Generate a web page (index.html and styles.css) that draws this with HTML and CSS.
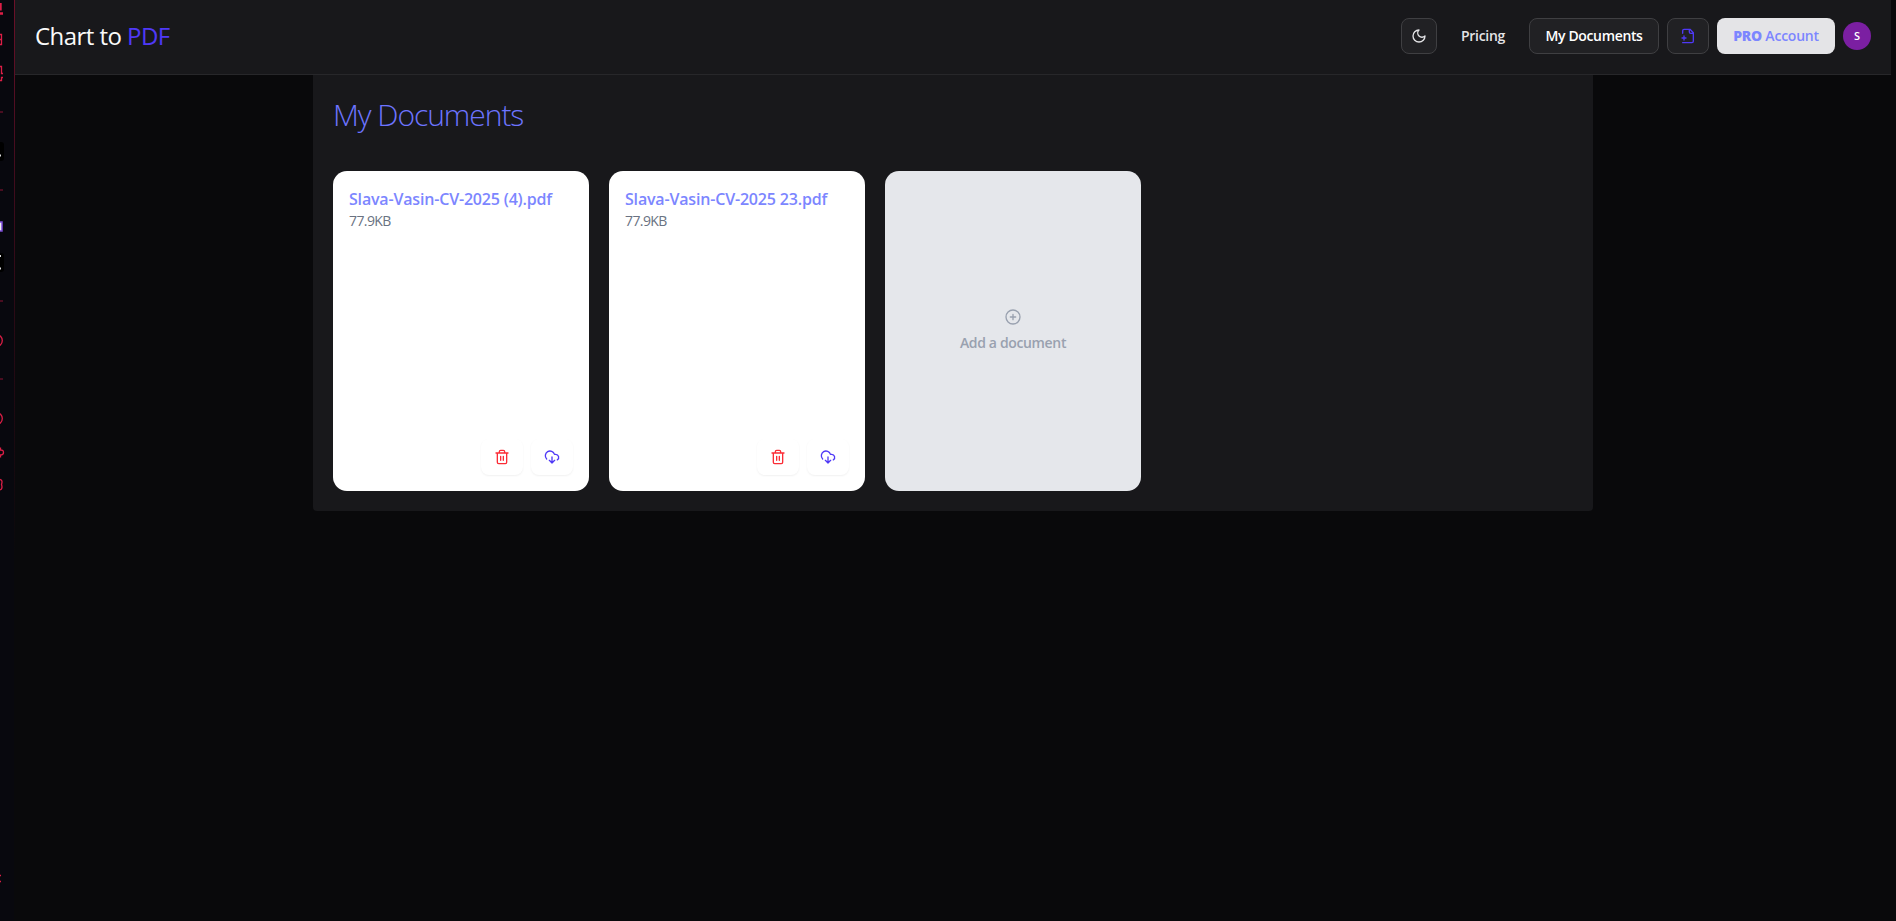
FILE: index.html
```html
<!DOCTYPE html>
<html lang="en">
<head>
<meta charset="utf-8">
<title>Chart to PDF</title>
<link rel="stylesheet" href="styles.css">
</head>
<body>
<svg class="defs" width="0" height="0" aria-hidden="true">
  <symbol id="trash" viewBox="0 0 24 24"><path d="M3 6h18M19 6v14a2 2 0 0 1-2 2H7a2 2 0 0 1-2-2V6M8 6V4a2 2 0 0 1 2-2h4a2 2 0 0 1 2 2v2M10 11v6M14 11v6"/></symbol>
  <symbol id="download" viewBox="0 0 24 24"><path d="M4 14.899A7 7 0 1 1 15.71 8h1.79a4.5 4.5 0 0 1 2.5 8.242M12 12v9M8 17l4 4 4-4"/></symbol>
</svg>
<aside class="rail">
  <svg class="rail-icons" viewBox="0 0 15 921" width="15" height="921">
    <g class="rail-red">
      <path class="rail-bold" d="M0.500 3V10.500M0 13.500H3"/>
      <path d="M0 34.500H1.500V44.500H0M0 39.500H2"/>
      <path d="M0 66.500H1.500V73.500H3M0 80.500H1.500V77.500H3"/>
      <circle cx="-3.700" cy="340.500" r="6"/>
      <circle cx="-3.700" cy="418.500" r="6"/>
      <path d="M0.500 447.500V450Q3.500 450 3.500 452.500T0.500 455V457.500"/>
      <path d="M0 479.500Q3 480 1.500 484.500Q3 489 0 490"/>
      <path d="M0 875.500H1M0 881.500H1"/>
    </g>
    <g class="rail-lines"><path d="M0 112H3M0 190H3M0 301H3M0 379H3"/></g>
    <rect x="-8" y="142" width="12" height="19" rx="3"/>
    <rect x="-8" y="253" width="12" height="19" rx="3"/>
    <path class="rail-white" d="M0 155.500H1M0 256H1M0 268.500H1"/>
    <rect class="rail-purple" x="-6" y="222" width="8" height="9"/>
  </svg>
</aside>
<div class="page">
  <header class="topbar">
    <a class="brand">Chart to <span>PDF</span></a>
    <nav class="nav">
      <button class="btn outline square"><svg class="icon" viewBox="0 0 24 24"><path d="M12 3a6 6 0 0 0 9 9 9 9 0 1 1-9-9Z"/></svg></button>
      <a class="btn pricing">Pricing</a>
      <a class="btn outline docs">My Documents</a>
      <button class="btn outline new"><svg class="icon" viewBox="0 0 24 24"><path d="M4 22h14a2 2 0 0 0 2-2V7l-5-5H6a2 2 0 0 0-2 2v4M14 2v4a2 2 0 0 0 2 2h4M3 15h6M6 12v6"/></svg></button>
      <a class="btn pro"><span><b>PRO</b> Account</span></a>
      <span class="avatar">S</span>
    </nav>
  </header>
  <main class="panel">
    <h1>My Documents</h1>
    <div class="cards">
      <article class="card">
        <h2>Slava-Vasin-CV-2025 (4).pdf</h2>
        <p>77.9KB</p>
        <div class="actions">
          <button class="action remove"><svg class="icon"><use href="#trash"/></svg></button>
          <button class="action save"><svg class="icon"><use href="#download"/></svg></button>
        </div>
      </article>
      <article class="card">
        <h2>Slava-Vasin-CV-2025 23.pdf</h2>
        <p>77.9KB</p>
        <div class="actions">
          <button class="action remove"><svg class="icon"><use href="#trash"/></svg></button>
          <button class="action save"><svg class="icon"><use href="#download"/></svg></button>
        </div>
      </article>
      <a class="card add">
        <svg class="icon" viewBox="0 0 24 24"><circle cx="12" cy="12" r="10.500"/><path d="M8 12h8M12 8v8"/></svg>
        <span>Add a document</span>
      </a>
    </div>
  </main>
</div>
</body>
</html>
```
FILE: styles.css
```css
* { box-sizing: border-box; }
body {
  margin: 0;
  height: 921px;
  display: flex;
  overflow: hidden;
  background: #09090b;
  color: #fafafa;
  font-family: "Open Sans", "Noto Sans", sans-serif;
}
h1, h2, p { margin: 0; }
.defs { position: absolute; }
.rail {
  flex: 0 0 15px;
  background: linear-gradient(#6d1129, #4a0d20 130px, #2c0a16 300px, #09090b 560px) right / 1px 100% no-repeat, #08080e;
}
.rail-icons { display: block; }
.rail-red { fill: none; stroke: #dc1e46; stroke-width: 1.3; }
.rail-bold { stroke-width: 2.4; }
.rail-lines { stroke: #4a0d20; stroke-width: 2; }
.rail-white { stroke: #ddd; stroke-width: 2; }
.rail-purple { fill: #eee; stroke: #7c4bd8; stroke-width: 1.500; }
.page { flex: 1; margin-right: 5px; }
.topbar {
  height: 75px;
  padding: 0 20px 3px;
  display: flex;
  align-items: center;
  justify-content: space-between;
  background: #18181b;
  border-bottom: 1px solid #27272a;
}
.brand { font-size: 24px; letter-spacing: -0.55px; white-space: nowrap; }
.brand span { color: #4f39f6; }
.nav { display: flex; align-items: center; gap: 8px; }
.btn {
  height: 36px;
  display: flex;
  align-items: center;
  justify-content: center;
  padding: 0;
  border: 1px solid transparent;
  border-radius: 8px;
  color: #e4e4e7;
  font-size: 14px;
  font-weight: 600;
  white-space: nowrap;
}
.outline { background: #212124; border-color: #3f3f42; }
.square { width: 36px; }
.pricing { width: 76px; letter-spacing: -0.3px; }
.docs { width: 130px; color: #fff; letter-spacing: -0.35px; }
.new { width: 42px; color: #4f39f6; }
.pro { width: 118px; background: #e4e4e7; color: #7c86ff; letter-spacing: -0.22px; }
.pro b { font-weight: 800; }
.avatar {
  width: 28px;
  height: 28px;
  border-radius: 50%;
  background: #7b1fa2;
  display: flex;
  align-items: center;
  justify-content: center;
  color: #fff;
  font-size: 11px;
  font-weight: 600;
}
.icon {
  width: 16px;
  height: 16px;
  display: block;
  fill: none;
  stroke: currentColor;
  stroke-width: 2;
  stroke-linecap: round;
  stroke-linejoin: round;
}
.panel {
  width: 1280px;
  height: 436px;
  margin-left: 298px;
  padding: 20px;
  background: #18181b;
  border-radius: 0 0 4px 4px;
}
h1 {
  height: 76px;
  line-height: 39px;
  font-size: 30px;
  font-weight: 300;
  letter-spacing: -1.05px;
  color: #6d74ff;
}
.cards { display: flex; gap: 20px; }
.card {
  width: 256px;
  height: 320px;
  padding: 16px;
  display: flex;
  flex-direction: column;
  border-radius: 14px;
  background: #fff;
}
h2 {
  font-size: 16px;
  line-height: 24px;
  font-weight: 600;
  color: #7c86ff;
  white-space: nowrap;
  letter-spacing: -0.18px;
}
.card p { font-size: 14px; line-height: 20px; color: #6a7282; letter-spacing: -0.6px; }
.actions { margin-top: auto; display: flex; justify-content: flex-end; gap: 8px; }
.action {
  width: 42px;
  height: 36px;
  padding: 0;
  display: flex;
  align-items: center;
  justify-content: center;
  border: 0;
  border-radius: 8px;
  background: #fff;
  box-shadow: 0 1px 2px rgba(0, 0, 0, 0.06);
}
.remove { color: #fb2c36; }
.save { color: #4f39f6; }
.add {
  align-items: center;
  justify-content: center;
  gap: 8px;
  background: #e5e7eb;
  color: #99a1af;
  font-size: 14px;
  font-weight: 600;
  line-height: 20px;
  letter-spacing: -0.35px;
}
```
